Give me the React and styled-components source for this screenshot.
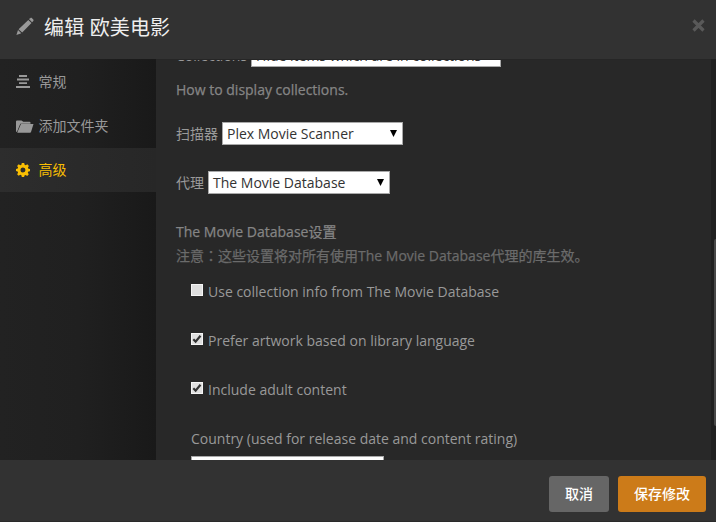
import React from "react";
import styled, { createGlobalStyle } from "styled-components";

const GlobalStyle = createGlobalStyle`
  * { box-sizing: border-box; }
  body {
    margin: 0;
    background: #282828;
    font-family: "Open Sans", "Noto Sans CJK SC", sans-serif;
    font-size: 14px;
    color: #999;
    overflow: hidden;
  }
`;

const Dialog = styled.div`
  display: flex;
  flex-direction: column;
  width: 716px;
  height: 522px;
  overflow: hidden;
`;

const Header = styled.header`
  display: flex;
  align-items: center;
  height: 59px;
  padding: 0 11px 6px 16px;
  background: #323232;
`;

const Title = styled.h1`
  flex: 1;
  margin: 2px 0 0 10px;
  font-size: 20px;
  line-height: 28px;
  font-weight: 400;
  letter-spacing: 0.15px;
  color: #eee;
  white-space: nowrap;
`;

const CloseButton = styled.button`
  display: flex;
  padding: 0;
  margin-top: -3px;
  border: 0;
  background: none;
  color: #595959;
`;

const Body = styled.div`
  display: flex;
  height: 401px;
`;

const Sidebar = styled.nav`
  width: 156px;
  flex: none;
  background: linear-gradient(to right, #222 0, #202020 50%, #191919 100%);
`;

const NavItem = styled.a`
  display: flex;
  align-items: center;
  height: 44px;
  padding-left: 16px;
  color: ${(p) => (p.$active ? "#f9be03" : "#999")};
  background: ${(p) => (p.$active ? "linear-gradient(to right, #2d2d2d, #272727)" : "none")};

  svg { flex: none; }

  &:first-child { height: 45px; }
`;

const NavLabel = styled.span`
  margin-left: ${(p) => p.$gap}px;
  line-height: 20px;
`;

const Content = styled.main`
  flex: 1;
  height: 401px;
  overflow: hidden;
  background: #282828;
  border-top: 1px solid #262626;
`;

const ScrolledForm = styled.form`
  margin-top: -16px;
  padding-left: 20px;
`;

const Field = styled.div`
  display: flex;
  align-items: center;
  gap: 4px;
  height: 23px;
  margin-bottom: ${(p) => p.$space}px;
  white-space: nowrap;
`;

const FieldLabel = styled.span`
  line-height: 20px;
`;

const SelectBox = styled.div`
  display: flex;
  align-items: center;
  justify-content: space-between;
  width: ${(p) => p.$width}px;
  height: 23px;
  padding: 0 5px 0 4px;
  border: 1px solid #a9a9a9;
  background: #fff;
  color: #333;
  line-height: 20px;

  svg { margin-bottom: 1px; }
`;

const Help = styled.p`
  margin: 0 0 ${(p) => p.$space}px;
  height: 24px;
  line-height: 24px;
  color: ${(p) => p.$color};
  -webkit-text-stroke: 0.25px ${(p) => p.$color};
  white-space: nowrap;
`;

const CenteredColon = styled.span`
  font-family: "Noto Sans CJK TC", sans-serif;
  line-height: 1;
`;

const Settings = styled.div`
  padding-left: 15px;
`;

const CheckRow = styled.label`
  display: flex;
  align-items: center;
  gap: 5px;
  height: 24px;
  margin-bottom: 25px;
  white-space: nowrap;
`;

const CheckText = styled.span`
  line-height: 20px;
`;

const CheckBox = styled.span`
  display: flex;
  align-items: center;
  justify-content: center;
  width: 12px;
  height: 12px;
  margin-bottom: 4px;
  border: 1px solid #f5f5f5;
  background: #dfdfdf;
`;

const Caption = styled.div`
  height: 29px;
  line-height: 24px;
  white-space: nowrap;
`;

const ScrollTrack = styled.div`
  display: flex;
  justify-content: flex-end;
  width: 5px;
  flex: none;
  padding-top: 180px;
  background: #202020;
`;

const ScrollThumb = styled.div`
  width: 2px;
  height: 187px;
  border-radius: 2px 0 0 2px;
  background: #484848;
`;

const Footer = styled.footer`
  display: flex;
  justify-content: flex-end;
  gap: 9px;
  height: 62px;
  padding: 16px 10px 0 0;
  background: #323232;
  border-bottom: 1px solid #2a2a2a;
`;

const Button = styled.button`
  width: ${(p) => p.$width}px;
  height: 36px;
  padding: 0 0 2px;
  border: 0;
  border-radius: 3px;
  font-family: inherit;
  font-size: 14px;
  font-weight: 500;
  color: #fff;
  background: ${(p) => (p.$primary ? "#cc7b19" : "#666")};
`;

const PencilIcon = () => (
  <svg width="18" height="19" viewBox="0 0 18 19" fill="#999">
    <path d="M14.3 1.2c.5-.5 1.2-.5 1.7 0l1.3 1.3c.4.4.4 1 0 1.5l-1.2 1.2-3.2-3.1zM12.3 2.9l3.2 3.1-9.3 9.6-3.6-3.400zM2 13l3.300 3.200-4.900 1.900z" />
  </svg>
);

const CloseIcon = () => (
  <svg width="13" height="13" viewBox="0 0 13 13" stroke="currentColor" strokeWidth="3.2">
    <path d="M1.5 1.5l10 10M11.5 1.5l-10 10" />
  </svg>
);

const LinesIcon = () => (
  <svg width="14" height="13" viewBox="0 0 14 13" fill="currentColor">
    <path d="M3 0h8v2H3zM1 3.600h12v1.900H1zM3 7.200h8v1.900H3zM0 11h14v2H0z" />
  </svg>
);

const FolderIcon = () => (
  <svg width="18" height="13" viewBox="0 0 18 13" fill="currentColor">
    <path d="M0 1.500Q0 .5 1 .5h4.500l1.800 1.300h6.200q1 0 1 1v.9H4.300L1 11.800H0z" />
    <path d="M4.900 4.100H17.500L15 12q-.2.700-1 .7H1.200z" />
  </svg>
);

const GearIcon = () => (
  <svg width="14" height="14" viewBox="0 0 14 14" fill="currentColor" fillRule="evenodd">
    <path d="M5.800 0h2.400l.4 1.800 1.100.5 1.600-1 1.600 1.600-1 1.600.5 1.200 1.600.3v2.200l-1.700.4-.5 1.200 1 1.500-1.600 1.600-1.500-1-1.200.5L8.100 14H5.800l-.4-1.700-1.200-.5-1.500 1-1.600-1.600 1-1.500-.5-1.200L0 8.100V5.900l1.700-.4.4-1.100-1-1.500 1.600-1.600 1.600 1 1.100-.5zM7 4.500a2.500 2.500 0 100 5 2.500 2.500 0 000-5z" />
  </svg>
);

const Arrow = () => (
  <svg width="7" height="7" viewBox="0 0 7 7" fill="#000">
    <path d="M0 0h7L3.500 7z" />
  </svg>
);

const Tick = () => (
  <svg width="10" height="10" viewBox="0 0 10 10" fill="none" stroke="#333" strokeWidth="2.2">
    <path d="M1.300 5.300l2.300 2.300L8.500 1.700" />
  </svg>
);

const Select = ({ width, children }) => (
  <SelectBox $width={width}>
    <span>{children}</span>
    {children && <Arrow />}
  </SelectBox>
);

const options = [
  { label: "Use collection info from The Movie Database", checked: false },
  { label: "Prefer artwork based on library language", checked: true },
  { label: "Include adult content", checked: true },
];

export default function App() {
  return (
    <>
      <GlobalStyle />
      <Dialog>
        <Header>
          <PencilIcon />
          <Title>编辑 欧美电影</Title>
          <CloseButton aria-label="Close"><CloseIcon /></CloseButton>
        </Header>
        <Body>
          <Sidebar>
            <NavItem><LinesIcon /><NavLabel $gap={8.5}>常规</NavLabel></NavItem>
            <NavItem><FolderIcon /><NavLabel $gap={4.5}>添加文件夹</NavLabel></NavItem>
            <NavItem $active><GearIcon /><NavLabel $gap={8.5}>高级</NavLabel></NavItem>
          </Sidebar>
          <Content>
            <ScrolledForm>
              <Field $space={11}>
                <FieldLabel>Collections</FieldLabel>
                <Select width={250}>Hide items which are in collections</Select>
              </Field>
              <Help $color="#858585" $space={20}>How to display collections.</Help>
              <Field $space={26}>
                <FieldLabel>扫描器</FieldLabel>
                <Select width={181}>Plex Movie Scanner</Select>
              </Field>
              <Field $space={26}>
                <FieldLabel>代理</FieldLabel>
                <Select width={182}>The Movie Database</Select>
              </Field>
              <Help $color="#858585" $space={0}>The Movie Database设置</Help>
              <Help $color="#6b6b6b" $space={12}>
                注意<CenteredColon lang="zh-TW">：</CenteredColon>这些设置将对所有使用The Movie Database代理的库生效。
              </Help>
              <Settings>
                {options.map((o) => (
                  <CheckRow key={o.label}>
                    <CheckBox>{o.checked && <Tick />}</CheckBox>
                    <CheckText>{o.label}</CheckText>
                  </CheckRow>
                ))}
                <Caption>Country (used for release date and content rating)</Caption>
                <Select width={193} />
              </Settings>
            </ScrolledForm>
          </Content>
          <ScrollTrack><ScrollThumb /></ScrollTrack>
        </Body>
        <Footer>
          <Button $width={60}>取消</Button>
          <Button $width={88} $primary>保存修改</Button>
        </Footer>
      </Dialog>
    </>
  );
}
